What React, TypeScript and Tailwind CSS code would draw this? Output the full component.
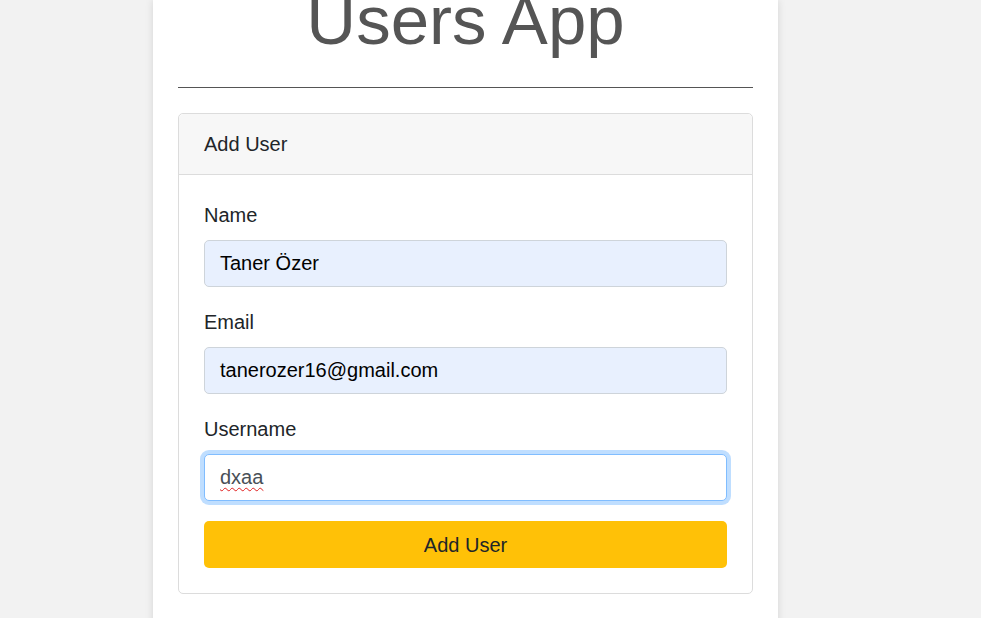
import React from "react";

export default function App() {
  const font = { fontFamily: '"Liberation Sans", Arial, sans-serif' };
  return (
    <div className="min-h-[618px] w-full bg-[#f2f2f2] overflow-hidden" style={font}>
      <div className="ml-[153px] flex min-h-[640px] w-[625px] flex-col bg-white px-[25px] shadow-[0_0_8px_rgba(0,0,0,0.12)]">
        <h1 className="mt-[-14px] h-[69px] text-center text-[69px] leading-[69px] font-normal text-[#555555]">
          Users App
        </h1>
        <hr className="mt-[32px] border-0 border-t border-[#555555]" />
        <div className="mt-[25px] rounded-[5px] border border-[#dcdcdc] bg-white">
          <div className="border-b border-[#dcdcdc] bg-[#f7f7f7] px-[25px] py-[15px] text-[20px] leading-[30px] text-[#212529] rounded-t-[5px]">
            Add User
          </div>
          <div className="p-[25px] text-[20px] leading-[30px] text-[#212529]">
            <div className="mb-[20px]">
              <div className="mb-[10px]">Name</div>
              <div className="h-[47px] rounded-[5px] border border-[#ced4da] bg-[#e8f0fe] px-[15px] py-[7px] leading-[30px] text-black">
                Taner Özer
              </div>
            </div>
            <div className="mb-[20px]">
              <div className="mb-[10px]">Email</div>
              <div className="h-[47px] rounded-[5px] border border-[#ced4da] bg-[#e8f0fe] px-[15px] py-[7px] leading-[30px] text-black">
                tanerozer16@gmail.com
              </div>
            </div>
            <div className="mb-[20px]">
              <div className="mb-[10px]">Username</div>
              <div className="h-[47px] rounded-[5px] border border-[#80bdff] bg-white px-[15px] py-[7px] leading-[30px] text-[#495057] shadow-[0_0_0_4px_rgba(0,123,255,0.25)]">
                <span className="underline decoration-wavy decoration-[#e02020] decoration-1 underline-offset-[3px]">dxaa</span>
              </div>
            </div>
            <button className="block h-[47px] w-full rounded-[5px] bg-[#ffc107] text-[20px] leading-[30px] text-[#212529]">
              Add User
            </button>
          </div>
        </div>
      </div>
    </div>
  );
}
